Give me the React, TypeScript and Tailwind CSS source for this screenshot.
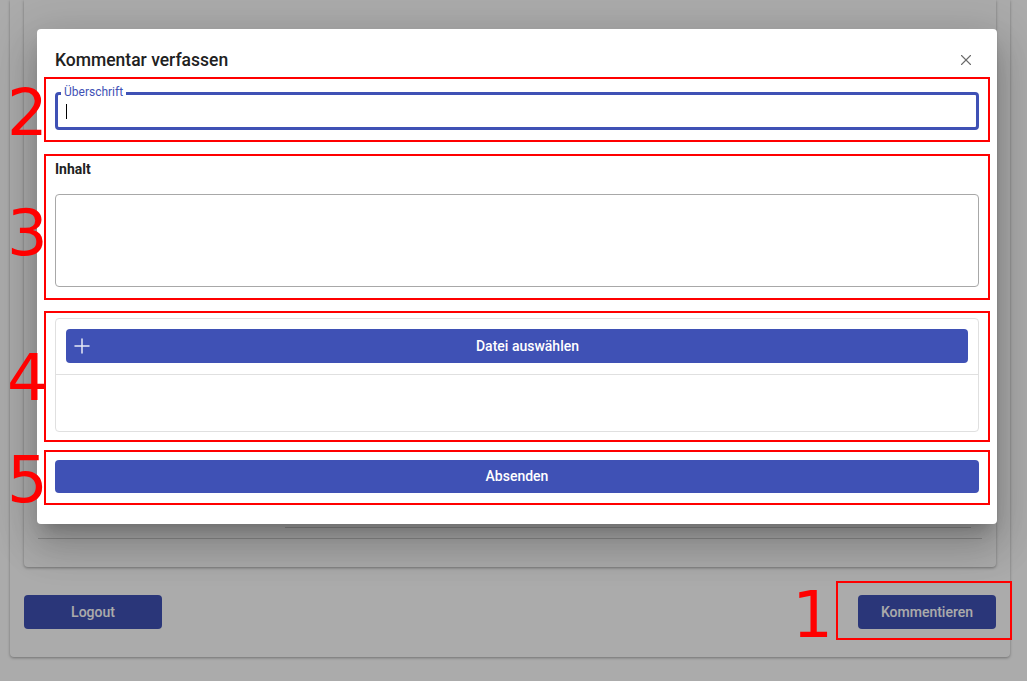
import { X, Plus } from "lucide-react";

const font = { fontFamily: "Roboto, 'Noto Sans', sans-serif" };

function Num({ n, className }: { n: string; className: string }) {
  return (
    <span
      className={`absolute text-[64px] leading-none text-[#ff0000] select-none ${className}`}
      style={{ fontFamily: "'DejaVu Sans', sans-serif" }}
    >
      {n}
    </span>
  );
}

function Underlay() {
  return (
    <div className="pl-[10px] pr-[17px]">
      <div className="h-[657px] rounded-b-[4px] bg-white shadow-[0_1px_3px_rgba(0,0,0,0.35)] px-[14px] flex flex-col">
        <div className="h-[567px] rounded-b-[4px] bg-white shadow-[0_1px_3px_rgba(0,0,0,0.35)] px-[14px] flex flex-col justify-end pb-[28px]">
          <div className="ml-[247px] mr-[11px] h-px bg-[#d0d0d0] mb-[10px]" />
          <div className="h-px bg-[#d0d0d0]" />
        </div>
        <div className="mt-[28px] flex items-center justify-between">
          <button className="w-[138px] h-[34px] rounded-[4px] bg-[#3f51b5] text-white text-[14px] font-medium">Logout</button>
          <button className="w-[138px] h-[34px] rounded-[4px] bg-[#3f51b5] text-white text-[14px] font-medium">Kommentieren</button>
        </div>
      </div>
    </div>
  );
}

export default function App() {
  return (
    <div className="relative w-full h-[681px] overflow-hidden bg-white" style={font}>
      <Underlay />
      <div className="absolute inset-0 bg-black/[0.33]" />

      {/* annotation around the Kommentieren button */}
      <div className="absolute left-[836px] top-[581px] w-[176px] h-[59px] border-2 border-[#ff0000]">
        <Num n="1" className="right-full mr-[5px] top-[0px]" />
      </div>

      <div className="absolute left-[37px] top-[29px] w-[960px] rounded-[4px] bg-white shadow-[0_11px_15px_-7px_rgba(0,0,0,0.2),0_24px_38px_3px_rgba(0,0,0,0.14),0_9px_46px_8px_rgba(0,0,0,0.12)] pb-[19px]">
        <div className="mt-[14px] h-[34px] pl-[18px] pr-[22px] flex items-center justify-between">
          <h2 className="text-[17.5px] font-medium text-[#212121]">Kommentar verfassen</h2>
          <X size={18} strokeWidth={1.5} className="text-[#6b6b6b]" />
        </div>

        <div className="relative mx-[7px] border-2 border-[#ff0000] px-[9px] pt-[13px] pb-[10px]">
          <Num n="2" className="left-[-39px] top-[2px]" />
          <div className="relative h-[38px] rounded-[4px] border-[3px] border-[#3f51b5] flex items-center pl-[8px]">
            <span className="absolute left-[3px] -top-[10px] bg-white px-[3px] text-[12px] leading-[14px] text-[#3f51b5]">Überschrift</span>
            <span className="w-px h-[15px] bg-black" />
          </div>
        </div>

        <div className="relative mx-[7px] mt-[12px] border-2 border-[#ff0000] px-[9px] pt-[3px] pb-[11px]">
          <Num n="3" className="left-[-39px] top-[45px]" />
          <div className="text-[14px] leading-[20px] font-bold text-[#212121]">Inhalt</div>
          <div className="mt-[15px] h-[93px] rounded-[4px] border border-[#a8a8a8]" />
        </div>

        <div className="relative mx-[7px] mt-[11px] border-2 border-[#ff0000] px-[9px] pt-[5px] pb-[8px]">
          <Num n="4" className="left-[-39px] top-[33px]" />
          <div className="rounded-[4px] border border-[#e0e0e0]">
            <div className="px-[10px] pt-[10px]">
              <button className="w-full h-[34px] rounded-[4px] bg-[#3f51b5] text-white text-[14px] font-medium flex items-center pl-[4px] pr-[7px]">
                <Plus size={24} strokeWidth={1.5} className="text-[#e8eaf6]" />
                <span className="flex-1 text-center">Datei auswählen</span>
              </button>
            </div>
            <div className="mt-[11px] h-px bg-[#e0e0e0]" />
            <div className="h-[56px]" />
          </div>
        </div>

        <div className="relative mx-[7px] mt-[8px] border-2 border-[#ff0000] px-[9px] pt-[8px] pb-[10px]">
          <Num n="5" className="left-[-39px] top-[-4px]" />
          <button className="w-full h-[33px] rounded-[4px] bg-[#3f51b5] text-white text-[14px] font-medium">Absenden</button>
        </div>
      </div>
    </div>
  );
}
